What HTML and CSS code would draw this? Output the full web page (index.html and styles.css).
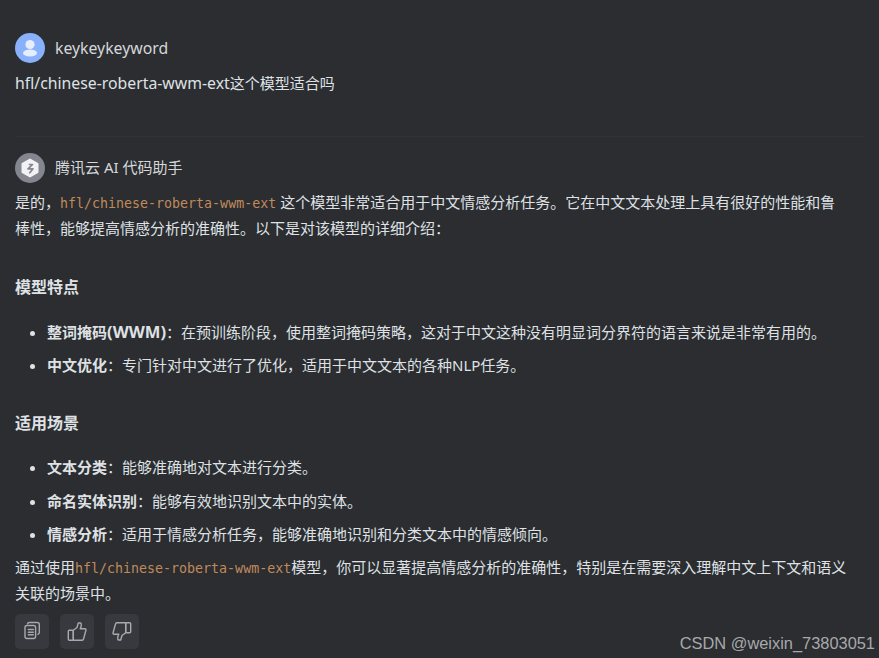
FILE: index.html
```html
<!DOCTYPE html>
<html lang="zh-CN">
<head>
    <meta charset="UTF-8">
    <meta name="viewport" content="width=device-width, initial-scale=1.0">
    <title>腾讯云 AI 代码助手</title>
    <link rel="stylesheet" href="styles.css">
</head>
<body>
    <div class="chat">
        <section class="message user-message">
            <div class="author">
                <svg class="avatar" viewBox="0 0 30 30">
                    <circle cx="15" cy="15" r="15" fill="#88b0fb"/>
                    <circle cx="15" cy="11.5" r="4.6" fill="#e6eefc"/>
                    <ellipse cx="15" cy="20" rx="7" ry="3.6" fill="#e6eefc"/>
                </svg>
                <span class="author-name latin">keykeykeyword</span>
            </div>
            <p class="question"><span class="latin">hfl/chinese-roberta-wwm-ext</span>这个模型适合吗</p>
        </section>

        <section class="message bot-message">
            <div class="author">
                <svg class="avatar" viewBox="0 0 30 30">
                    <circle cx="15" cy="15" r="15" fill="#83858f"/>
                    <path d="M15 6.500l7.500 4.300v8.400L15 23.500l-7.500-4.300v-8.400z" fill="#f2f2f4" stroke="#f2f2f4" stroke-width="2" stroke-linejoin="round"/>
                    <path d="M14.500 11.500H17.500L13 15.800H18L14.800 19.800" fill="none" stroke="#83858f" stroke-width="1.700" stroke-linejoin="round" stroke-linecap="round"/>
                </svg>
                <span class="author-name">腾讯云 AI 代码助手</span>
            </div>
            <p>是的，<code class="code-gap">hfl/chinese-roberta-wwm-ext</code>这个模型非常适合用于中文情感分析任务。它在中文文本处理上具有很好的性能和鲁棒性，能够提高情感分析的准确性。以下是对该模型的详细介绍：</p>

            <h3>模型特点</h3>
            <ul>
                <li><strong>整词掩码<span class="latin">(WWM)</span></strong>：在预训练阶段，使用整词掩码策略，这对于中文这种没有明显词分界符的语言来说是非常有用的。</li>
                <li><strong>中文优化</strong>：专门针对中文进行了优化，适用于中文文本的各种NLP任务。</li>
            </ul>

            <h3>适用场景</h3>
            <ul>
                <li><strong>文本分类</strong>：能够准确地对文本进行分类。</li>
                <li><strong>命名实体识别</strong>：能够有效地识别文本中的实体。</li>
                <li><strong>情感分析</strong>：适用于情感分析任务，能够准确地识别和分类文本中的情感倾向。</li>
            </ul>
            <p class="summary">通过使用<code>hfl/chinese-roberta-wwm-ext</code>模型，你可以显著提高情感分析的准确性，特别是在需要深入理解中文上下文和语义关联的场景中。</p>

            <div class="actions">
                <button class="action-btn" title="复制">
                    <svg viewBox="0 0 20 20" class="action-icon">
                        <path d="M5.500 2.800c.2-.8.8-1.300 1.700-1.300h8c1.400 0 2.100.7 2.100 2.100v8c0 .9-.5 1.500-1.300 1.700"/>
                        <rect x="3" y="4.500" width="10.600" height="13" rx="2"/>
                        <path d="M6.300 8.500h5M6.300 11.200h5M6.300 13.800h5"/>
                    </svg>
                </button>
                <button class="action-btn" title="赞">
                    <svg viewBox="0 0 20 20" class="action-icon">
                        <rect x="1.300" y="9.200" width="5" height="10" rx="1"/>
                        <path d="M6.300 9.200L10 6.500 11.300 2h2.500c.8.500.6 4-.6 5.800H18c.7 0 1.200.5 1 1.200L16.500 18c-.2.800-.7 1.200-1.300 1.200H6.300z"/>
                    </svg>
                </button>
                <button class="action-btn" title="踩">
                    <svg viewBox="0 0 20 20" class="action-icon">
                        <g transform="rotate(180 10 10.500)">
                            <rect x="1.300" y="9.200" width="5" height="10" rx="1"/>
                            <path d="M6.300 9.200L10 6.500 11.300 2h2.500c.8.500.6 4-.6 5.800H18c.7 0 1.200.5 1 1.200L16.500 18c-.2.800-.7 1.200-1.300 1.200H6.300z"/>
                        </g>
                    </svg>
                </button>
            </div>
        </section>
    </div>
    <div class="watermark">CSDN @weixin_73803051</div>
</body>
</html>
```

FILE: styles.css
```css
html, body {
    height: 100%;
}
body {
    margin: 0;
    overflow: hidden;
    background-color: #2b2d30;
    color: #dfe1e5;
    font-family: "Noto Sans", "Noto Sans CJK SC", sans-serif;
    font-size: 15px;
    line-height: 26px;
}
.chat {
    width: 833px;
    padding-left: 15px;
}
.latin {
    font-size: 15.800px;
}
strong .latin {
    font-size: 16.600px;
}
.message {
    border-bottom: 1px solid #323234;
}
.user-message {
    padding-top: 33px;
    height: 103px;
    width: 849px;
}
.bot-message {
    border-bottom: none;
    padding-top: 16px;
}
.author {
    display: flex;
    align-items: center;
    gap: 10px;
    height: 30px;
}
.avatar {
    width: 30px;
    height: 30px;
    flex-shrink: 0;
}
.author-name {
    color: #d5d7db;
}
.bot-message .author-name {
    padding-bottom: 2px;
}
.question {
    margin: 7px 0 0;
}
p {
    margin: 6px 0 0;
}
.summary {
    margin-top: 6.400px;
}
code {
    font-family: "DejaVu Sans Mono", monospace;
    font-size: 13.300px;
    line-height: 1;
    color: #c08a5c;
}
.code-gap {
    margin-right: 4px;
}
h3 {
    margin: 32px 0 0;
    font-size: 16px;
    line-height: 26px;
    font-weight: bold;
}
p + h3 {
    margin-top: 33px;
}
ul {
    margin: 18px 0 0;
    padding-left: 32px;
}
p + h3 + ul {
    margin-top: 19px;
}
li {
    margin-bottom: 7.400px;
}
li:last-child {
    margin-bottom: 0;
}
strong {
    font-weight: bold;
}
.actions {
    display: flex;
    gap: 11px;
    margin-top: 8px;
}
.action-btn {
    display: flex;
    align-items: center;
    justify-content: center;
    width: 34px;
    height: 35px;
    padding: 0;
    border: none;
    border-radius: 5px;
    background-color: #37393e;
    cursor: pointer;
}
.action-icon {
    width: 20px;
    height: 20px;
    fill: none;
    stroke: #a8a9ad;
    stroke-width: 1.400;
    stroke-linejoin: round;
    stroke-linecap: round;
}
.watermark {
    position: absolute;
    right: 4px;
    bottom: 2px;
    color: #a8a9ab;
    font-family: "Liberation Sans", sans-serif;
    font-size: 16.400px;
    line-height: 26px;
}
```
